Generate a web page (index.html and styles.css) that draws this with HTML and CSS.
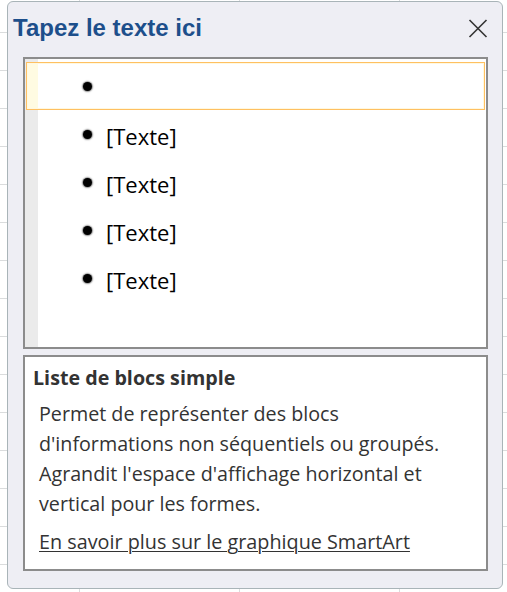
FILE: index.html
```html
<!DOCTYPE html>
<html lang="fr">
<head>
<meta charset="utf-8">
<title>Tapez le texte ici</title>
<link rel="stylesheet" href="styles.css">
</head>
<body>
<div class="panel">
  <div class="header">
    <h1 class="title">Tapez le texte ici</h1>
    <button class="close" aria-label="Fermer">
      <svg width="20" height="19" viewBox="0 0 20 19"><path d="M1.5 1 L18.5 18 M18.5 1 L1.5 18" stroke="#333" stroke-width="1.6" fill="none"/></svg>
    </button>
  </div>
  <div class="editor">
    <div class="row active"><span class="bullet"></span><span class="txt"></span></div>
    <div class="row"><span class="bullet"></span><span class="txt">[Texte]</span></div>
    <div class="row"><span class="bullet"></span><span class="txt">[Texte]</span></div>
    <div class="row"><span class="bullet"></span><span class="txt">[Texte]</span></div>
    <div class="row"><span class="bullet"></span><span class="txt">[Texte]</span></div>
  </div>
  <div class="desc">
    <div class="desc-title">Liste de blocs simple</div>
    <p class="desc-text">Permet de représenter des blocs<br>d'informations non séquentiels ou groupés.<br>Agrandit l'espace d'affichage horizontal et<br>vertical pour les formes.</p>
    <a class="desc-link" href="#">En savoir plus sur le graphique SmartArt</a>
  </div>
</div>
</body>
</html>
```

FILE: styles.css
```css
html, body {
  margin: 0;
  padding: 0;
}
body {
  width: 507px;
  height: 592px;
  overflow: hidden;
  background-color: #fff;
  background-image:
    linear-gradient(to bottom, transparent 32px, #dadcdd 32px, #dadcdd 33px, transparent 33px),
    linear-gradient(to right, transparent 79px, #dadcdd 79px, #dadcdd 80px, transparent 80px);
  background-size: 100% 38px, 160px 100%;
  background-position: 0 0, 0 0;
  font-family: "Open Sans", "Noto Sans", sans-serif;
}
.panel {
  box-sizing: border-box;
  margin: 1px 0 0 7px;
  width: 496px;
  height: 588px;
  border: 1px solid #a9b4b8;
  border-radius: 6px;
  background: #eeeef4;
  display: flex;
  flex-direction: column;
}
.header {
  height: 55px;
  flex: none;
  display: flex;
  align-items: flex-start;
  justify-content: space-between;
  padding: 0 14px 0 5px;
}
.title {
  margin: 13px 0 0 0;
  font-family: "Liberation Sans", Arial, sans-serif;
  font-weight: bold;
  font-size: 24px;
  line-height: 26px;
  color: #1d4f8b;
}
.close {
  margin-top: 17px;
  padding: 0;
  border: 0;
  background: transparent;
  width: 20px;
  height: 19px;
  display: block;
}
.close svg { display: block; }
.editor {
  flex: none;
  margin: 0 14px 0 15px;
  height: 292px;
  box-sizing: border-box;
  border: 2px solid #8c8c8c;
  background: linear-gradient(to right, #ebebeb 13px, #fff 13px);
  padding: 3px 1px 0 1px;
}
.row {
  box-sizing: border-box;
  height: 48px;
  display: flex;
  align-items: center;
  border: 1px solid transparent;
}
.row.active {
  border-color: #ffc061;
  background: linear-gradient(to right, #fffbe2 11px, #fff 11px);
  box-shadow: inset 0 0 0 1px #fff8e0;
}
.bullet {
  width: 9px;
  height: 9px;
  border-radius: 50%;
  background: #000;
  box-shadow: 0 0 1.5px 0.8px rgba(0,0,0,0.55);
  margin: 1px 14px 0 56px;
  flex: none;
}
.txt {
  font-family: "Open Sans", "Noto Sans", sans-serif;
  font-size: 22px;
  color: #000;
  line-height: 28px;
  position: relative;
  top: 2px;
}
.desc {
  flex: none;
  margin: 6px 14px 0 15px;
  height: 216px;
  box-sizing: border-box;
  border: 2px solid #8c8c8c;
  background: #fff;
  padding: 8px 6px 0 8px;
  color: #333;
}
.desc-title {
  font-weight: 700;
  font-size: 19.7px;
  line-height: 26px;
  color: #333;
}
.desc-text {
  margin: 8px 0 0 6px;
  font-size: 19.7px;
  line-height: 30px;
  color: #333;
  white-space: nowrap;
}
.desc-link {
  display: inline-block;
  margin: 8px 0 0 6px;
  font-size: 19.8px;
  line-height: 30px;
  color: #333;
  text-decoration: underline;
  text-decoration-thickness: 1px;
  text-underline-offset: 2px;
  white-space: nowrap;
}
```
